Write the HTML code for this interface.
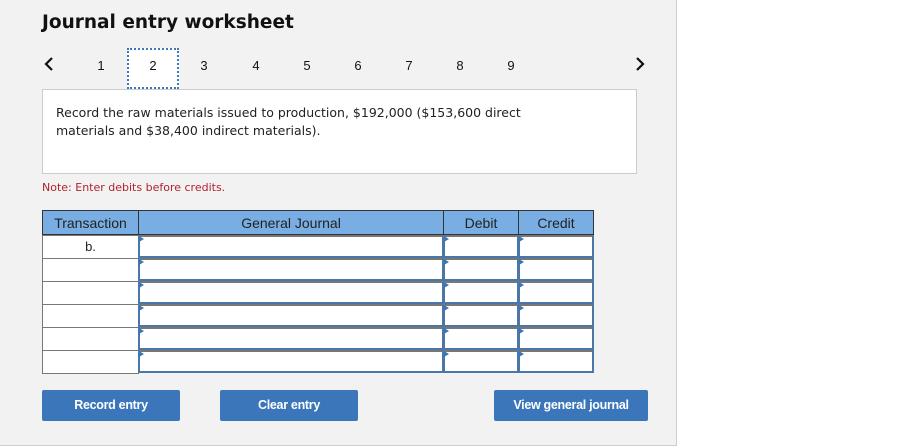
<!DOCTYPE html>
<html><head><style>
body{margin:0;width:920px;height:447px;background:#fff;position:relative;overflow:hidden;font-family:"DejaVu Sans",Verdana,sans-serif}
.panel{position:absolute;left:0;top:0;width:676px;height:445px;background:#f2f2f2;border-right:1px solid #ccc;border-bottom:1px solid #ccc}
.a{position:absolute}
h1{position:absolute;left:42px;top:12px;margin:0;font-size:18.5px;font-weight:bold;color:#111}
.n{position:absolute;top:58px;font-family:"Liberation Sans",Arial,sans-serif;font-size:13px;color:#111;width:20px;text-align:center}
.sel{position:absolute;left:127px;top:48px;width:52px;height:41px;background:#fff;border:2px dotted #3a76b9;box-sizing:border-box}
.box{position:absolute;left:42px;top:89px;width:595px;height:85px;background:#fff;border:1px solid #ccc;box-sizing:border-box;padding:14px 13px;font-size:12.5px;line-height:18px;color:#222}
.box span{display:block;width:495px}
.note{position:absolute;left:42px;top:181px;font-size:11px;color:#b2222f}
.th{position:absolute;top:210px;height:25px;background:#78aee3;border:1px solid #333;box-sizing:border-box;font-family:"Liberation Sans",Arial,sans-serif;font-size:14px;color:#222;text-align:center;line-height:24px}
.tc{position:absolute;left:42px;width:97px;height:24px;border:1px solid #777;box-sizing:border-box;background:#fff;font-family:"Liberation Sans",Arial,sans-serif;font-size:13px;text-align:center;line-height:22px;color:#222}
.in{position:absolute;height:23px;background:#fff;border:2px solid #4a76a8;border-top-color:#777;box-sizing:border-box}
.in:before{content:"";position:absolute;left:-1px;top:-1px;border-left:5px solid #3a76b9;border-top:3px solid transparent;border-bottom:3px solid transparent}
.btn{position:absolute;top:390px;height:31px;background:#3a76b9;border-radius:2px;color:#fff;font-family:"Liberation Sans",Arial,sans-serif;font-size:12.5px;font-weight:bold;text-align:center;line-height:31px;letter-spacing:-0.3px}
</style></head><body>
<div class="panel"></div>
<h1>Journal entry worksheet</h1>
<svg class="a" style="left:43px;top:56px" width="12" height="16"><path d="M9 2 L3 8 L9 14" stroke="#111" stroke-width="2.2" fill="none"/></svg>
<svg class="a" style="left:634px;top:56px" width="12" height="16"><path d="M3 2 L9 8 L3 14" stroke="#111" stroke-width="2.2" fill="none"/></svg>
<div class="sel"></div>
<div class="n" style="left:91px">1</div>
<div class="n" style="left:143px">2</div>
<div class="n" style="left:194px">3</div>
<div class="n" style="left:246px">4</div>
<div class="n" style="left:297px">5</div>
<div class="n" style="left:348px">6</div>
<div class="n" style="left:399px">7</div>
<div class="n" style="left:450px">8</div>
<div class="n" style="left:501px">9</div>
<div class="box"><span>Record the raw materials issued to production, $192,000 ($153,600 direct materials and $38,400 indirect materials).</span></div>
<div class="note">Note: Enter debits before credits.</div>
<div class="th" style="left:42px;width:97px">Transaction</div>
<div class="th" style="left:138px;width:306px">General Journal</div>
<div class="th" style="left:443px;width:76px">Debit</div>
<div class="th" style="left:518px;width:76px">Credit</div>

<div class="tc" style="top:235px">b.</div><div class="in" style="left:138px;top:235px;width:306px"></div><div class="in" style="left:443px;top:235px;width:76px"></div><div class="in" style="left:518px;top:235px;width:76px"></div>
<div class="tc" style="top:258px"></div><div class="in" style="left:138px;top:258px;width:306px"></div><div class="in" style="left:443px;top:258px;width:76px"></div><div class="in" style="left:518px;top:258px;width:76px"></div>
<div class="tc" style="top:281px"></div><div class="in" style="left:138px;top:281px;width:306px"></div><div class="in" style="left:443px;top:281px;width:76px"></div><div class="in" style="left:518px;top:281px;width:76px"></div>
<div class="tc" style="top:304px"></div><div class="in" style="left:138px;top:304px;width:306px"></div><div class="in" style="left:443px;top:304px;width:76px"></div><div class="in" style="left:518px;top:304px;width:76px"></div>
<div class="tc" style="top:327px"></div><div class="in" style="left:138px;top:327px;width:306px"></div><div class="in" style="left:443px;top:327px;width:76px"></div><div class="in" style="left:518px;top:327px;width:76px"></div>
<div class="tc" style="top:350px"></div><div class="in" style="left:138px;top:350px;width:306px"></div><div class="in" style="left:443px;top:350px;width:76px"></div><div class="in" style="left:518px;top:350px;width:76px"></div>

<div class="btn" style="left:42px;width:138px">Record entry</div>
<div class="btn" style="left:220px;width:138px">Clear entry</div>
<div class="btn" style="left:494px;width:154px">View general journal</div>
</body></html>
